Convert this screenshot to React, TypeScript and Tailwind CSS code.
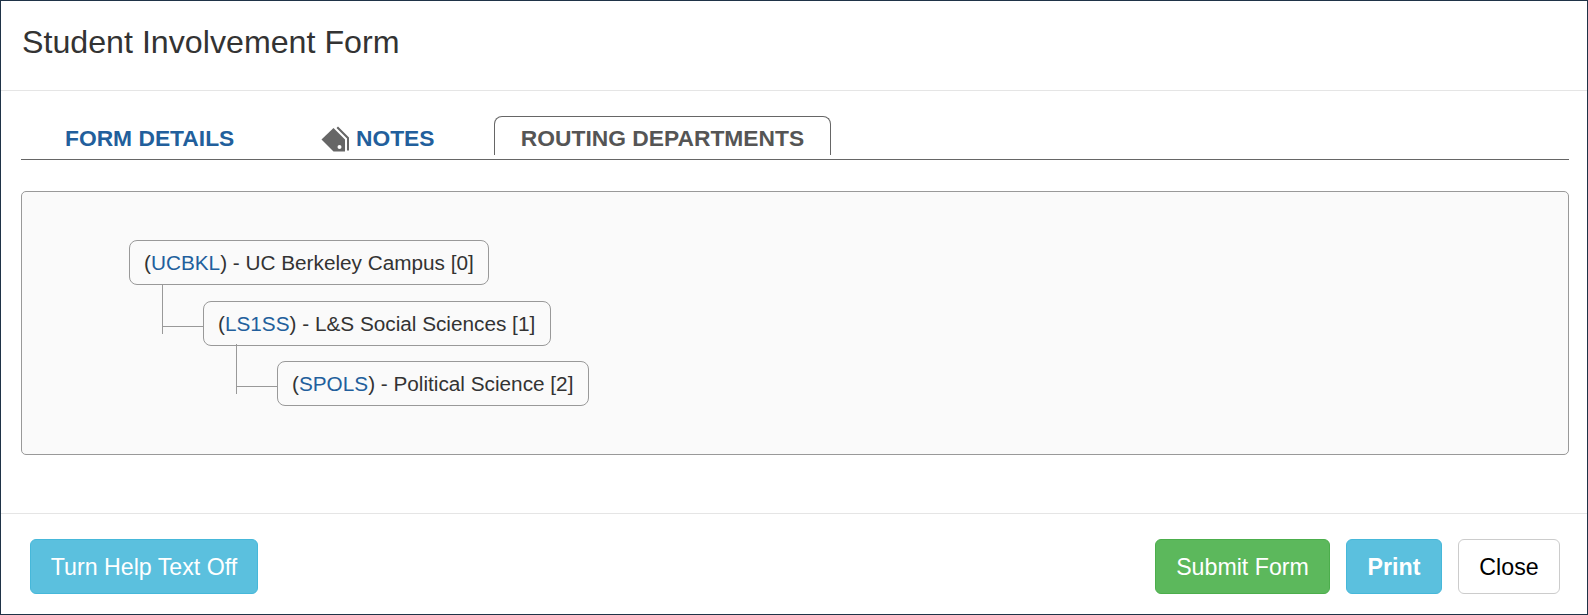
const font = "font-['Liberation_Sans',Arial,sans-serif]";

function TagsIcon() {
  return (
    <svg viewBox="0 0 28 26" className="h-[26px] w-[28px] shrink-0 fill-[#666]">
      <path d="M0.5 13.5 12.5 2 24 13.5V25.5H12.5Z" />
      <path d="M17 0.5 28 11.5V24.5H26V12.5L15.5 2Z" />
      <circle cx="18.5" cy="21" r="2" fill="#fff" />
    </svg>
  );
}

function TreeNode({ code, name, level }: { code: string; name: string; level: number }) {
  return (
    <div className="flex h-[45px] w-fit items-center rounded-[8px] border border-[#999] pt-[2px] pr-[14.5px] pl-[14px] text-[20.75px] leading-none text-[#333]">
      <span>
        (<span className="text-[#225f9c]">{code}</span>) - {name} [{level}]
      </span>
    </div>
  );
}

function Connector() {
  return (
    <div className="-mt-[17px] h-[50px] w-[41px] shrink-0 border-l border-[#999]">
      <div className="mt-[42px] h-px bg-[#999]" />
    </div>
  );
}

export default function App() {
  return (
    <div className={`${font} flex h-[615px] w-[1588px] flex-col border border-[#1f3347] bg-white`}>
      <div className="flex h-[90px] shrink-0 items-center border-b border-[#e5e5e5] pb-[6px] pl-[21px]">
        <h4 className="text-[32.2px] leading-none text-[#333]">Student Involvement Form</h4>
      </div>

      <div className="flex-1 pr-[18px] pl-[20px]">
        <div className="mt-[25px] flex h-[44px] items-start border-b border-[#666] pl-[44px]">
          <div className="flex h-[45px] w-[256px] items-center text-[22.8px] font-bold text-[#225f9c]">FORM DETAILS</div>
          <div className="flex h-[45px] w-[173px] items-center gap-[7px] text-[22.8px] font-bold text-[#225f9c]">
            <TagsIcon />
            NOTES
          </div>
          <div className="flex h-[39px] w-[337px] items-center justify-center rounded-t-[8px] border border-b-0 border-[#666] pt-[5px] text-[22.8px] font-bold text-[#555]">
            ROUTING DEPARTMENTS
          </div>
        </div>

        <div className="mt-[31px] h-[264px] rounded-[5px] border border-[#999] bg-[#fafafa] pt-[48px] pl-[107px]">
          <TreeNode code="UCBKL" name="UC Berkeley Campus" level={0} />
          <div className="mt-[16px] ml-[33px]">
            <div className="flex">
              <Connector />
              <TreeNode code="LS1SS" name="L&S Social Sciences" level={1} />
            </div>
            <div className="mt-[15px] ml-[74px] flex">
              <Connector />
              <TreeNode code="SPOLS" name="Political Science" level={2} />
            </div>
          </div>
        </div>
      </div>

      <div className="flex h-[101px] shrink-0 items-start justify-between border-t border-[#e5e5e5] pt-[25px] pr-[27px] pl-[29px] text-[23.2px]">
        <button className="h-[55px] w-[228px] rounded-[6px] border border-[#46b8da] bg-[#5bc0de] pt-[2px] text-white">Turn Help Text Off</button>
        <div className="flex gap-[16px]">
          <button className="h-[55px] w-[175px] rounded-[6px] border border-[#4cae4c] bg-[#5cb85c] pt-[2px] text-white">Submit Form</button>
          <button className="h-[55px] w-[96px] rounded-[6px] border border-[#46b8da] bg-[#5bc0de] pt-[2px] font-bold text-white">Print</button>
          <button className="h-[55px] w-[102px] rounded-[6px] border border-[#ccc] bg-white pt-[2px] text-black">Close</button>
        </div>
      </div>
    </div>
  );
}
